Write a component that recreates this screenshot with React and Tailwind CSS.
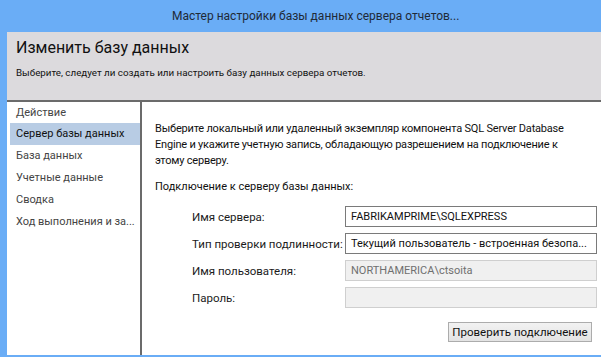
import { useState } from "react";

const steps = [
  "Действие",
  "Сервер базы данных",
  "База данных",
  "Учетные данные",
  "Сводка",
  "Ход выполнения и за...",
];

const font = { fontFamily: '"Segoe UI", Roboto, "Noto Sans", sans-serif' };

const Field = ({ label, value, disabled }) => (
  <div className="flex items-center h-[21px]">
    <div className="w-[153px] shrink-0 whitespace-nowrap text-[11.5px] text-[#1b1b1b]">{label}</div>
    <div
      className={
        disabled
          ? "flex-1 h-full border border-[#cfcfcf] bg-[#f0f0f0] text-[#6f6f6f] pl-[5px] flex items-center whitespace-nowrap overflow-hidden"
          : "flex-1 h-full border border-[#7a7a7a] bg-white text-[#111] pl-[5px] flex items-center whitespace-nowrap overflow-hidden"
      }
    >
      {value}
    </div>
  </div>
);

const App = () => {
  const [active] = useState(1);

  return (
    <div
      className="w-[601px] h-[357px] bg-[#6aadf6] flex flex-col overflow-hidden"
      style={font}
    >
      {/* title bar */}
      <div className="h-[32px] shrink-0 flex items-center pl-[172px] text-[12px] text-[#1f2a38] whitespace-nowrap">
        Мастер настройки базы данных сервера отчетов...
      </div>

      <div className="flex-1 ml-[7px] mb-[2px] flex flex-col bg-white min-h-0">
        {/* header */}
        <div className="h-[70px] shrink-0 bg-[#dcdadd] pl-[9px] pt-[4px] border-b-2 border-[#6b6b6b]">
          <div className="text-[16px] text-[#111] leading-[24px]">Изменить базу данных</div>
          <div className="text-[9.8px] text-[#111] mt-[6px] leading-[14px]">
            Выберите, следует ли создать или настроить базу данных сервера отчетов.
          </div>
        </div>

        <div className="flex-1 flex min-h-0">
          {/* sidebar */}
          <div className="w-[135px] shrink-0 border-r-2 border-[#6b6b6b] pt-[2px] text-[11px]">
            {steps.map((s, i) => (
              <div
                key={s}
                className={
                  i === active
                    ? "ml-[3px] pl-[6px] h-[22px] flex items-center bg-[#b8cce4] text-[#111] whitespace-nowrap"
                    : i === 0
                    ? "ml-[3px] pl-[6px] h-[19px] flex items-center text-[#444] whitespace-nowrap"
                    : "ml-[3px] pl-[6px] h-[22px] flex items-center text-[#444] whitespace-nowrap"
                }
              >
                {s}
              </div>
            ))}
          </div>

          {/* content */}
          <div className="flex-1 pl-[13px] pt-[19px] text-[11px] leading-[16px] text-[#111] min-w-0">
            <p className="w-[430px] tracking-[-0.2px]">
              Выберите локальный или удаленный экземпляр компонента SQL Server Database
              Engine и укажите учетную запись, обладающую разрешением на подключение к
              этому серверу.
            </p>
            <p className="mt-[10px]">Подключение к серверу базы данных:</p>

            <div className="mt-[11px] ml-[37px] flex flex-col gap-[6px] pr-[4px]">
              <Field label="Имя сервера:" value="FABRIKAMPRIME\SQLEXPRESS" />
              <Field
                label="Тип проверки подлинности:"
                value="Текущий пользователь - встроенная безопа..."
              />
              <Field label="Имя пользователя:" value="NORTHAMERICA\ctsoita" disabled />
              <Field label="Пароль:" value="" disabled />
            </div>

            <div className="flex justify-end pr-[9px] mt-[14px]">
              <button className="h-[20px] w-[144px] border border-[#acacac] bg-gradient-to-b from-[#f2f2f2] to-[#e3e3e3] text-[#111] text-[11.5px]">
                Проверить подключение
              </button>
            </div>
          </div>
        </div>
      </div>
    </div>
  );
};

export default App;
